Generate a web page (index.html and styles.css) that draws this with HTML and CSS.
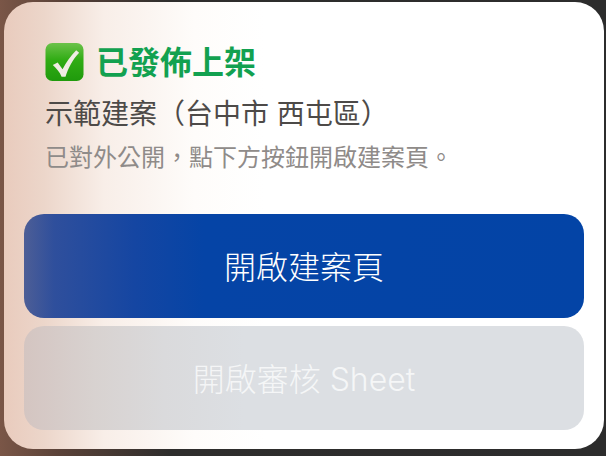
FILE: index.html
```html
<!DOCTYPE html>
<html lang="zh-Hant">
<head>
    <meta charset="UTF-8">
    <title>已發佈上架</title>
    <link rel="stylesheet" href="styles.css">
</head>
<body>
    <div class="card">
        <div class="info">
            <div class="title-row">
                <svg class="check" viewBox="0 0 40 40" aria-hidden="true">
                    <defs>
                        <linearGradient id="checkBg" x1="0" y1="0" x2="0" y2="1">
                            <stop offset="0" stop-color="#6cc24a"/>
                            <stop offset="0.45" stop-color="#30ac14"/>
                            <stop offset="1" stop-color="#1f9a0c"/>
                        </linearGradient>
                    </defs>
                    <rect x="0.5" y="0.5" width="39" height="39" rx="7" fill="url(#checkBg)"/>
                    <path d="M8 23 L13 20.5 L18 27.5 C22 20 26 14 32 8 L35 10.5 C28 18 24 26 21 35 L17 35 C15 30 12 27 8 23 Z" fill="#f0ece4"/>
                </svg>
                <h1>已發佈上架</h1>
            </div>
            <p class="name">示範建案（台中市 西屯區）</p>
            <p class="hint">已對外公開，點下方按鈕開啟建案頁。</p>
        </div>
        <div class="actions">
            <button class="btn btn-primary">開啟建案頁</button>
            <button class="btn btn-disabled">開啟審核 Sheet</button>
        </div>
    </div>
</body>
</html>
```

FILE: styles.css
```css
* {
    margin: 0;
    padding: 0;
    box-sizing: border-box;
}

body {
    width: 606px;
    height: 456px;
    overflow: hidden;
    padding: 2px 2px 7px 4px;
    font-family: "Liberation Sans", "Noto Sans CJK TC", sans-serif;
    background: linear-gradient(90deg, #7a5647 0, #5a4238 60px, #2e2d2c 170px, #2c2c2c 100%);
}

.card {
    height: 447px;
    display: flex;
    flex-direction: column;
    padding: 40px 20px 19px 20px;
    border-radius: 29px;
    background: linear-gradient(90deg, #e9cbbd 0, #ecd6ca 40px, #f8eee8 100px, #fefcfa 190px, #ffffff 260px);
}

.info {
    padding-left: 21px;
    height: 172px;
}

.title-row {
    display: flex;
    align-items: center;
    gap: 12px;
    height: 40px;
}

.check {
    width: 39px;
    height: 40px;
    flex: none;
}

h1 {
    padding-top: 2px;
    font-size: 32px;
    font-weight: 700;
    line-height: 40px;
    color: #12a150;
}

.name {
    margin-top: 13px;
    font-size: 28px;
    line-height: 40px;
    color: #4d4a48;
}

.hint {
    margin-top: 6px;
    font-size: 24px;
    line-height: 34px;
    color: #8f8b89;
}

.actions {
    display: flex;
    flex-direction: column;
    gap: 8px;
}

.btn {
    height: 104px;
    padding-bottom: 3px;
    border: none;
    border-radius: 20px;
    font-family: Inter, "Noto Sans CJK TC", sans-serif;
    font-size: 32px;
    font-weight: 300;
    color: #ffffff;
}

.btn-primary {
    background: linear-gradient(90deg, #4d5e96 0, #2f4f9c 30px, #1546a2 110px, #0544a6 180px, #0344a6 100%);
}

.btn-disabled {
    background: linear-gradient(90deg, #d4c5c1 0, #d8d2d0 70px, #dadadc 140px, #dcdfe3 220px);
    color: rgba(255, 255, 255, 0.72);
}
```
